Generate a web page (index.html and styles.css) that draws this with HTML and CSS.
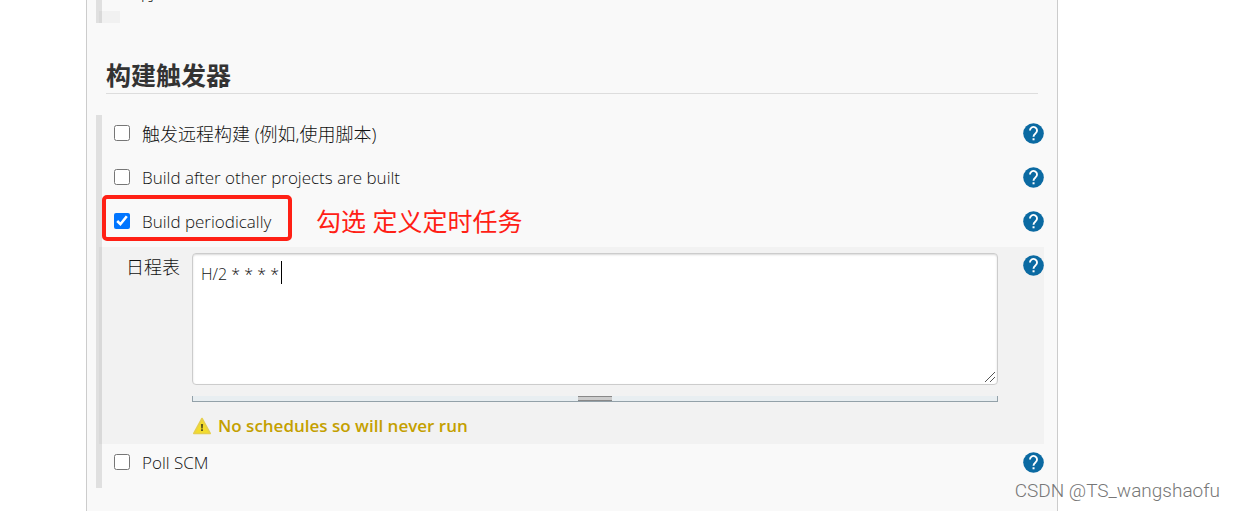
FILE: index.html
```html
<!DOCTYPE html>
<html lang="zh-CN">
<head>
<meta charset="utf-8">
<title>构建触发器</title>
<link rel="stylesheet" href="styles.css">
</head>
<body>
<svg class="defs" aria-hidden="true">
  <symbol id="help" viewBox="0 0 22 22">
    <circle cx="11" cy="11" r="10.8" fill="#0b6aa2"/>
    <path d="M7.3 7.900a3.700 3.700 0 1 1 5.900 2.900c-1.300 1-2.200 1.600-2.200 3.600" fill="none" stroke="#fff" stroke-width="2"/>
    <rect x="10" y="16" width="2.1" height="2.1" fill="#fff"/>
  </symbol>
</svg>
<main class="panel">
  <section class="previous">
    <div class="previous-text">行</div>
    <div class="previous-end"></div>
  </section>
  <h2 class="heading">构建触发器</h2>
  <form class="triggers">
    <div class="row">
      <input class="check" type="checkbox" id="remote">
      <label class="label chinese" for="remote">触发远程构建 (例如,使用脚本)</label>
      <button class="help" type="button" aria-label="Help"><svg><use href="#help"/></svg></button>
    </div>
    <div class="row">
      <input class="check" type="checkbox" id="after">
      <label class="label" for="after">Build after other projects are built</label>
      <button class="help" type="button" aria-label="Help"><svg><use href="#help"/></svg></button>
    </div>
    <div class="row">
      <div class="marked">
        <input class="check" type="checkbox" id="periodic" checked>
        <label class="label" for="periodic">Build periodically</label>
      </div>
      <span class="note">勾选 定义定时任务</span>
      <button class="help" type="button" aria-label="Help"><svg><use href="#help"/></svg></button>
    </div>
    <div class="schedule">
      <label class="schedule-label chinese" for="spec">日程表</label>
      <div class="schedule-body">
        <div class="field">
          <textarea class="spec" id="spec">H/2 * * * *</textarea>
          <span class="caret"></span>
          <svg class="grip" viewBox="0 0 12 12"><path d="M1 11 11 1M6 11l5-5" stroke="#555" fill="none"/></svg>
        </div>
        <div class="handle"><span class="handle-grip"></span></div>
        <p class="warning">
          <svg class="warning-icon" viewBox="0 0 20 18"><path d="M10 1.5 18.2 16.5H1.8z" fill="#f3dc2c" stroke="#e6cf4c" stroke-width="1.6" stroke-linejoin="round"/><path d="M8.900 7h2.200l-.3 4.400H9.200zM9 12.300h2v1.800H9z" fill="#625b20"/></svg>
          No schedules so will never run
        </p>
      </div>
      <button class="help" type="button" aria-label="Help"><svg><use href="#help"/></svg></button>
    </div>
    <div class="row">
      <input class="check" type="checkbox" id="poll">
      <label class="label" for="poll">Poll SCM</label>
      <button class="help" type="button" aria-label="Help"><svg><use href="#help"/></svg></button>
    </div>
  </form>
</main>
<div class="watermark">CSDN @TS_wangshaofu</div>
</body>
</html>
```
FILE: styles.css
```css
* { box-sizing: border-box; }
html, body { height: 100%; }
body {
  margin: 0;
  overflow: hidden;
  background: #fff;
  color: #111;
  font: 300 17px/24px "Open Sans", "Noto Sans CJK SC", sans-serif;
}
.defs { display: none; }
.panel {
  min-height: 100%;
  margin: 0 176px 0 86px;
  padding: 0 13px 23px 9px;
  background: #f9f9f9;
  border: solid #ccc;
  border-width: 0 1px;
}
.previous { display: flow-root; height: 23px; border-left: 6px solid #e0e0e0; }
.previous-text { height: 19px; margin-top: -8px; padding-left: 37px; line-height: 4px; }
.previous-end { width: 21px; height: 12px; margin-left: -3px; background: rgba(0, 0, 0, .03); }
.heading {
  margin: 36px 6px 21px 10px;
  padding-bottom: 2px;
  border-bottom: 1px solid #ddd;
  color: #333;
  font-size: 25px;
  font-weight: 700;
  line-height: 32px;
}
.triggers { border-left: 6px solid #e0e0e0; }
.row { display: flex; align-items: center; height: 44px; padding: 0 0 8px 12px; }
.check { flex: none; width: 16px; height: 16px; margin: 0; }
.label { margin-left: 12px; padding-top: 2px; }
.chinese { font-size: 18px; }
.help {
  flex: none;
  width: 21px;
  height: 21px;
  margin: 0 0 0 auto;
  padding: 0;
  border: 0;
  background: none;
}
.help svg { display: block; width: 21px; height: 21px; }
.marked {
  display: flex;
  flex: none;
  align-items: center;
  align-self: flex-start;
  width: 190px;
  height: 46px;
  margin: -8px 0 0 -12px;
  padding: 6px 0 0 8px;
  border: 4px solid #ff2015;
  border-radius: 5px;
}
.note { margin-left: 24px; color: #ff2015; font-size: 25px; font-weight: 400; line-height: 32px; }
.schedule {
  display: flex;
  margin-left: -3px;
  padding: 6px 0;
  background: rgba(0, 0, 0, .027);
}
.schedule-label { width: 93px; padding: 2px 12px 0 0; text-align: right; }
.schedule-body { flex: 1; }
.field { position: relative; height: 132px; }
.spec {
  display: block;
  width: 100%;
  height: 132px;
  padding: 8px;
  border: 1px solid #ccc;
  border-radius: 4px;
  outline: 0;
  resize: none;
  background: #fff;
  box-shadow: inset 0 1px 2px rgba(0, 0, 0, .15);
  color: #111;
  font: inherit;
  font-size: 16px;
}
.caret { position: absolute; left: 89px; top: 8px; width: 1px; height: 23px; background: #000; }
.grip { position: absolute; right: 2px; bottom: 2px; width: 12px; height: 12px; }
.handle {
  height: 6px;
  margin-top: 11px;
  border: solid #93a1a9;
  border-width: 0 1px 1px;
  background: #e8eef1;
}
.handle-grip {
  display: block;
  width: 34px;
  height: 5px;
  margin: 0 auto;
  border: solid #888;
  border-width: 1px 0;
  background: #ccc;
}
.warning {
  display: flex;
  align-items: center;
  gap: 6px;
  margin: 12px 0 0;
  color: #c4a000;
  font-weight: 600;
}
.warning-icon { width: 20px; height: 18px; }
.schedule .help { margin: 2px 0 0 25px; }
.watermark {
  position: absolute;
  right: 14px;
  bottom: 8px;
  color: #777;
  font: 300 19px/24px Roboto, sans-serif;
}
```
